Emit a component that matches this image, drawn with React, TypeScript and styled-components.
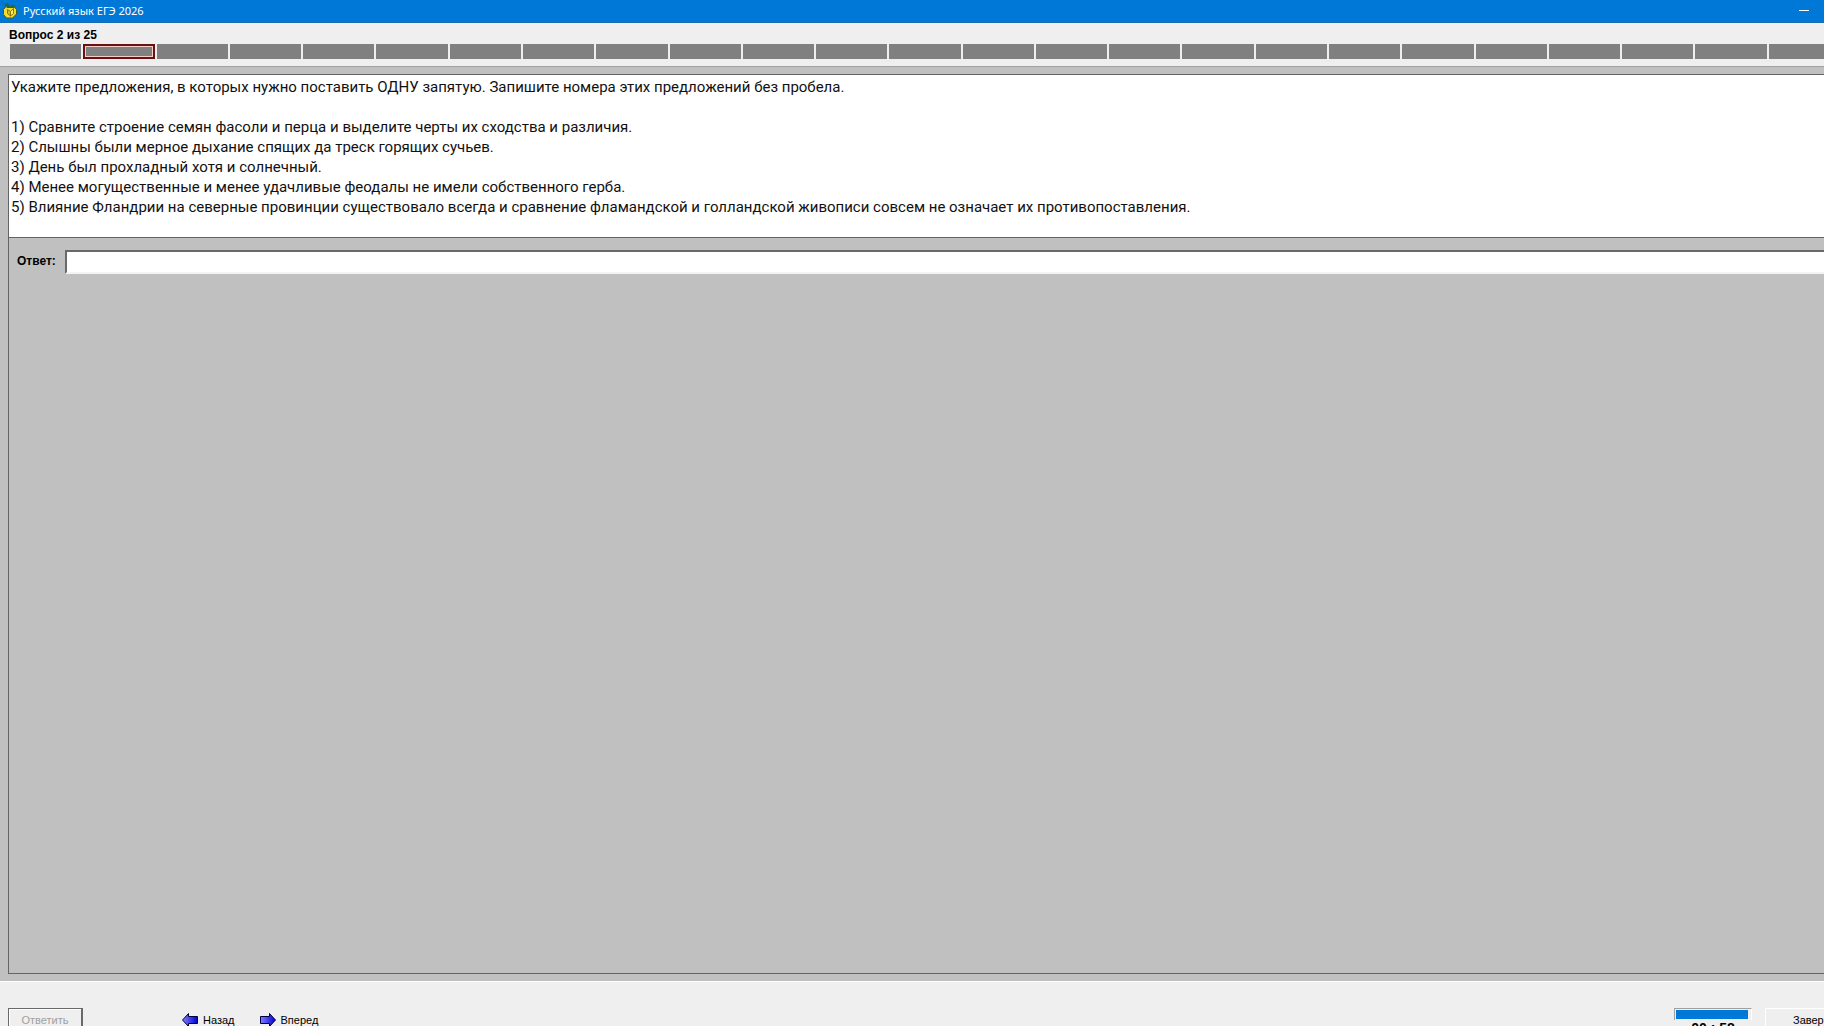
import React, { useState } from "react";
import styled, { createGlobalStyle } from "styled-components";

const GlobalStyle = createGlobalStyle`
  *, *::before, *::after { box-sizing: border-box; }
  html, body, #root { height: 100%; }
  body {
    margin: 0;
    overflow: hidden;
    background: #efefef;
    color: #000;
    font-family: "Liberation Sans", Arial, sans-serif;
    font-size: 12px;
  }
`;

const Window = styled.div`
  display: flex;
  flex-direction: column;
  height: 100vh;
  overflow: hidden;
`;

const TitleBar = styled.header`
  display: flex;
  align-items: center;
  flex: none;
  height: 23px;
  padding: 0 14px 0 2px;
  background: #0078d7;
  border-bottom: 1px solid #1a6bb0;
  color: #fff;
`;

const Title = styled.h1`
  flex: 1;
  margin: 0;
  padding-left: 5px;
  font: 400 11px/22px "Noto Sans", "Open Sans", sans-serif;
`;

const MinimizeButton = styled.button`
  display: flex;
  align-items: center;
  padding: 0;
  height: 20px;
  border: 0;
  background: none;
  color: #fff;
`;

const Progress = styled.section`
  flex: none;
  height: 43px;
  padding: 4px 0 0 9px;
  overflow: hidden;
`;

const Counter = styled.h2`
  margin: 0;
  font-size: 12px;
  font-weight: 700;
  line-height: 16px;
`;

const Segments = styled.div`
  display: grid;
  grid-template-columns: repeat(25, 1fr);
  gap: 2px;
  margin: 1px -16px 0 1px;
`;

const Segment = styled.button<{ $current: boolean }>`
  height: 15px;
  padding: 0;
  background: #808080;
  border: ${(p) => (p.$current ? "2px solid #6b1010" : "0")};
  box-shadow: ${(p) => (p.$current ? "inset 0 0 0 1px #f3cfcb" : "none")};
`;

const Workspace = styled.main`
  display: flex;
  flex: 1;
  min-height: 0;
  padding: 7px 0 7px 8px;
  background: #c0c0c0;
  border-top: 1px solid #a0a0a0;
  border-bottom: 1px solid #fff;
`;

const Panel = styled.div`
  flex: 1;
  border: 1px solid #646464;
  border-right: 0;
`;

const Question = styled.article`
  padding: 2px 2px 20px;
  background: #fff;
  border-bottom: 1px solid #646464;
  color: #111;
  font-family: Roboto, "Liberation Sans", sans-serif;
  font-size: 15px;
  line-height: 20px;
`;

const Prompt = styled.p`
  margin: 0 0 20px;
`;

const Sentences = styled.ol`
  margin: 0;
  padding: 0;
  list-style: none;
`;

const AnswerRow = styled.div`
  display: flex;
  align-items: flex-start;
  gap: 9px;
  padding: 12px 0 0 8px;
`;

const AnswerLabel = styled.label`
  width: 39px;
  font-size: 12px;
  font-weight: 700;
  line-height: 22px;
`;

const AnswerInput = styled.input`
  flex: 1;
  min-width: 0;
  height: 24px;
  padding: 0 4px;
  background: #fff;
  border: 2px solid #696969;
  border-width: 2px 0 2px 2px;
  border-bottom-color: #f4f4f4;
  border-radius: 0;
  outline: 0;
  font: inherit;
`;

const Footer = styled.footer`
  display: flex;
  align-items: flex-start;
  flex: none;
  height: 44px;
  padding: 26px 0 0 8px;
  overflow: hidden;
`;

const SubmitButton = styled.button`
  width: 75px;
  height: 24px;
  padding: 0;
  background: #efefef;
  border: 1px solid #696969;
  border-right-width: 2px;
  border-radius: 0;
  box-shadow: inset 1px 1px 0 #fff;
  color: #a0a0a0;
  font-family: inherit;
  font-size: 11px;
`;

const Navigation = styled.nav`
  display: flex;
  flex: 1;
  gap: 25px;
  padding-left: 99px;
`;

const NavButton = styled.button`
  display: flex;
  align-items: center;
  gap: 5px;
  height: 24px;
  padding: 0;
  border: 0;
  background: none;
  color: #000;
  font-family: inherit;
  font-size: 11px;
`;

const Timer = styled.div`
  width: 78px;
  text-align: center;
  font-size: 14px;
  font-weight: 700;
  line-height: 14px;
`;

const TimeTrack = styled.div`
  height: 12px;
  margin-bottom: 1px;
  padding: 1px 3px 1px 1px;
  border: 1px solid #a0a0a0;
  border-right-color: #fff;
  border-bottom: 0;
`;

const TimeFill = styled.div`
  height: 9px;
  background: #0078d7;
`;

const FinishButton = styled.button`
  width: 59px;
  height: 24px;
  margin-left: 13px;
  padding: 0 0 0 27px;
  overflow: hidden;
  background: #efefef;
  border: 1px solid #fff;
  border-right: 0;
  color: #000;
  font-family: inherit;
  font-size: 11px;
  text-align: left;
`;

const AppIcon = () => (
  <svg width="16" height="18" viewBox="0 0 16 18" aria-hidden="true">
    <path d="M4.500 4 1.500 7.500v5l3 3.500h6l4-4V7.500l-3-3.500Z" fill="#f4dc2c" stroke="#4d5a1c" />
    <path d="M2 1.500h3.500l3 3 2.500-2 2.500 2-2 1.500H5Z" fill="#1c6a4c" />
    <path d="M8.500 14V9.500l3-3v5Z" fill="#fff27a" stroke="#857508" />
    <path d="M8.500 14 5.500 11.500v-4l3 2Z" fill="#d6bd18" stroke="#857508" />
  </svg>
);

const Arrow = ({ forward = false }: { forward?: boolean }) => (
  <svg width="16" height="14" viewBox="0 0 16 14" aria-hidden="true">
    <defs>
      <linearGradient id={forward ? "forward" : "back"}>
        <stop stopColor="#8080ff" />
        <stop offset="1" stopColor="#0000d0" />
      </linearGradient>
    </defs>
    <path
      d={forward ? "M.5 3.5h9v-3l6 6.5-6 6.5v-3h-9Z" : "M15.5 3.5h-9v-3L.5 7l6 6.5v-3h9Z"}
      fill={forward ? "url(#forward)" : "url(#back)"}
      stroke="#000040"
    />
  </svg>
);

const sentences = [
  "Сравните строение семян фасоли и перца и выделите черты их сходства и различия.",
  "Слышны были мерное дыхание спящих да треск горящих сучьев.",
  "День был прохладный хотя и солнечный.",
  "Менее могущественные и менее удачливые феодалы не имели собственного герба.",
  "Влияние Фландрии на северные провинции существовало всегда и сравнение фламандской и голландской живописи совсем не означает их противопоставления.",
];

export default function App() {
  const [current, setCurrent] = useState(1);
  const [answer, setAnswer] = useState("");

  return (
    <Window>
      <GlobalStyle />
      <TitleBar>
        <AppIcon />
        <Title>Русский язык ЕГЭ 2026</Title>
        <MinimizeButton aria-label="Свернуть">
          <svg width="12" height="2" aria-hidden="true"><path d="M1 .5h10" stroke="currentColor" /></svg>
        </MinimizeButton>
      </TitleBar>
      <Progress>
        <Counter>Вопрос {current + 1} из 25</Counter>
        <Segments>
          {Array.from({ length: 25 }, (_, i) => (
            <Segment key={i} $current={i === current} aria-label={`Вопрос ${i + 1}`} onClick={() => setCurrent(i)} />
          ))}
        </Segments>
      </Progress>
      <Workspace>
        <Panel>
          <Question>
            <Prompt>Укажите предложения, в которых нужно поставить ОДНУ запятую. Запишите номера этих предложений без пробела.</Prompt>
            <Sentences>
              {sentences.map((text, i) => <li key={i}>{i + 1}) {text}</li>)}
            </Sentences>
          </Question>
          <AnswerRow>
            <AnswerLabel htmlFor="answer">Ответ:</AnswerLabel>
            <AnswerInput id="answer" value={answer} onChange={(e) => setAnswer(e.target.value)} />
          </AnswerRow>
        </Panel>
      </Workspace>
      <Footer>
        <SubmitButton disabled={!answer}>Ответить</SubmitButton>
        <Navigation>
          <NavButton onClick={() => setCurrent(Math.max(0, current - 1))}><Arrow />Назад</NavButton>
          <NavButton onClick={() => setCurrent(Math.min(24, current + 1))}><Arrow forward />Вперед</NavButton>
        </Navigation>
        <Timer>
          <TimeTrack><TimeFill /></TimeTrack>
          00 : 58
        </Timer>
        <FinishButton>Завер</FinishButton>
      </Footer>
    </Window>
  );
}
